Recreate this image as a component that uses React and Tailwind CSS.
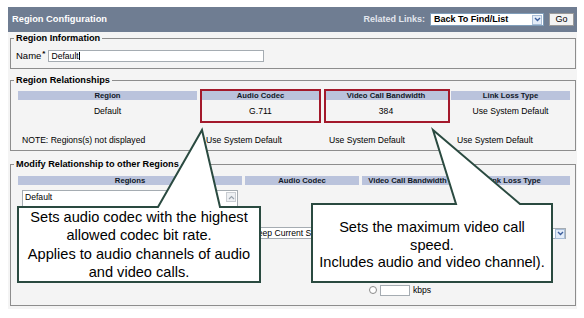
import React from 'react';

const HeaderCell = ({ children }) => (
  <div className="h-[9px] bg-[#bac3dc] flex items-center justify-center text-[7.7px] font-bold leading-none text-[#111827] overflow-hidden whitespace-nowrap">
    {children}
  </div>
);

const Chevron = () => (
  <span className="w-[10px] h-[10px] border border-[#a9bdd6] bg-[#e3ecf8] flex items-center justify-center">
    <svg width="7" height="5" viewBox="0 0 7 5">
      <path d="M1 1 L3.5 3.5 L6 1" fill="none" stroke="#3d5f9c" strokeWidth="1.4" />
    </svg>
  </span>
);

const Radio = () => (
  <span className="w-[8px] h-[8px] rounded-full border border-[#8a8a8a] bg-white inline-block" />
);

const App = () => {
  return (
    <div className="relative w-[584px] h-[318px] overflow-hidden bg-white font-['Liberation_Sans',Arial,sans-serif] text-black">
      <div className="ml-[8px] w-[569px] pt-[7px]">
        <div className="h-[25px] bg-[#6f7d92] flex items-center justify-between pl-[4px] pr-[3px]">
          <span className="text-white font-bold text-[9.3px]">Region Configuration</span>
          <div className="flex items-center">
            <span className="text-[#e2e6ee] font-bold text-[9px] mr-[5px]">Related Links:</span>
            <div className="w-[114px] h-[13px] bg-white border border-[#7f9db9] flex items-center justify-between pl-[3px] pr-[1px]">
              <span className="font-bold text-[9px] leading-none">Back To Find/List</span>
              <Chevron />
            </div>
            <button className="ml-[5px] w-[25px] h-[13px] bg-[#f3f3f3] border border-[#9a9a9a] text-[9px] leading-none flex items-center justify-center">
              Go
            </button>
          </div>
        </div>

        <div className="bg-[#f4f4f4] pl-[2px] pr-[1px] pb-[3px]">
          <fieldset className="border border-[#8d8d8d] pl-[7px] pr-[5px] pb-[6px]">
            <legend className="-ml-[4px] px-[2px] text-[9.2px] font-bold leading-[12px]">Region Information</legend>
            <div className="-ml-[2px] mt-[6px] flex items-center h-[12px]">
              <span className="text-[9.5px]">Name</span>
              <span className="text-[8px] font-bold self-start leading-none ml-[1px]">*</span>
              <div className="ml-[3px] w-[216px] h-[12px] bg-white border border-[#a5acb2] flex items-center pl-[2px]">
                <span className="text-[8.6px] leading-none">Default</span>
                <span className="w-px h-[8px] bg-black" />
              </div>
            </div>
          </fieldset>

          <fieldset className="mt-[5px] border border-[#8d8d8d] pl-[7px] pr-[5px] pb-[2px]">
            <legend className="-ml-[4px] px-[2px] text-[9.2px] font-bold leading-[12px]">Region Relationships</legend>
            <div className="mt-[5px] grid grid-cols-[179px_121px_124px_119px] gap-x-[3px] text-[8.6px]">
              <HeaderCell>Region</HeaderCell>
              <HeaderCell>Audio Codec</HeaderCell>
              <HeaderCell>Video Call Bandwidth</HeaderCell>
              <HeaderCell>Link Loss Type</HeaderCell>

              <div className="h-[22px] flex items-center justify-center">Default</div>
              <div className="h-[22px] flex items-center justify-center">G.711</div>
              <div className="h-[22px] flex items-center justify-center">384</div>
              <div className="h-[22px] flex items-center justify-center">Use System Default</div>

              <div className="mt-[10px] h-[16px] flex items-center pl-[4px]">NOTE: Regions(s) not displayed</div>
              <div className="mt-[10px] h-[16px] flex items-center pl-[6px]">Use System Default</div>
              <div className="mt-[10px] h-[16px] flex items-center pl-[5px]">Use System Default</div>
              <div className="mt-[10px] h-[16px] flex items-center pl-[6px]">Use System Default</div>
            </div>
          </fieldset>

          <fieldset className="mt-[7px] border border-[#8d8d8d] pl-[7px] pr-[5px] pb-[6px]">
            <legend className="-ml-[4px] px-[2px] text-[9.2px] font-bold leading-[12px]">Modify Relationship to other Regions</legend>
            <div className="mt-[6px] grid grid-cols-[224px_114px_91px_114px] gap-x-[3px] text-[8.6px]">
              <HeaderCell>Regions</HeaderCell>
              <HeaderCell>Audio Codec</HeaderCell>
              <HeaderCell>Video Call Bandwidth</HeaderCell>
              <HeaderCell>Link Loss Type</HeaderCell>

              <div className="h-[114px] pt-[5px] px-[4px]">
                <div className="h-[50px] bg-white border border-[#a5acb2] flex justify-between pl-[2px] pr-[1px] pt-[1px]">
                  <span className="leading-[11px]">Default</span>
                  <span className="w-[10px] h-[10px] border border-[#c9cdd2] bg-[#eef0f3] flex items-center justify-center">
                    <svg width="7" height="5" viewBox="0 0 7 5">
                      <path d="M1 4 L3.5 1.5 L6 4" fill="none" stroke="#9aa3ad" strokeWidth="1.2" />
                    </svg>
                  </span>
                </div>
              </div>
              <div className="h-[114px] pt-[42px] px-[4px]">
                <div className="h-[12px] bg-white border border-[#a5acb2] flex items-center pl-[2px] whitespace-nowrap overflow-hidden">
                  Keep Current Setting
                </div>
              </div>
              <div className="h-[114px] pt-[86px] pl-[7px] flex flex-col">
                <div className="h-[11px] flex items-end gap-[3px] leading-none"><Radio />None</div>
                <div className="mt-[2px] h-[12px] flex items-center gap-[3px]">
                  <Radio />
                  <span className="w-[30px] h-[11px] bg-white border border-[#a5acb2]" />
                  kbps
                </div>
              </div>
              <div className="h-[114px] pt-[43px] px-[4px]">
                <div className="h-[11px] bg-white border border-[#a5acb2] flex items-center justify-end">
                  <Chevron />
                </div>
              </div>
            </div>
          </fieldset>
        </div>
      </div>

      {/* annotation overlays */}
      <div className="absolute left-[200px] top-[89px] w-[121px] h-[34px] border-2 border-[#a3192b]" />
      <div className="absolute left-[324px] top-[89px] w-[126px] h-[34px] border-2 border-[#a3192b]" />

      <svg className="absolute left-0 top-0" width="584" height="318" viewBox="0 0 584 318">
        <path d="M18 207 L158 207 L202 130 L220 207 L260 207 L260 282 L18 282 Z" fill="#fff" stroke="#2a4a40" strokeWidth="2" />
        <path d="M312 204 L456 204 L433 130 L520 204 L552 204 L552 282 L312 282 Z" fill="#fff" stroke="#2a4a40" strokeWidth="2" />
      </svg>

      <div className="absolute left-[18px] top-[208px] w-[242px] text-center text-[14.6px] leading-[18.3px]">
        Sets audio codec with the highest
        <br />
        allowed codec bit rate.
        <br />
        Applies to audio channels of audio
        <br />
        and video calls.
      </div>
      <div className="absolute left-[312px] top-[219px] w-[240px] text-center text-[14.6px] leading-[17.5px]">
        Sets the maximum video call
        <br />
        speed.
        <br />
        Includes audio and video channel).
      </div>
    </div>
  );
};

export default App;
